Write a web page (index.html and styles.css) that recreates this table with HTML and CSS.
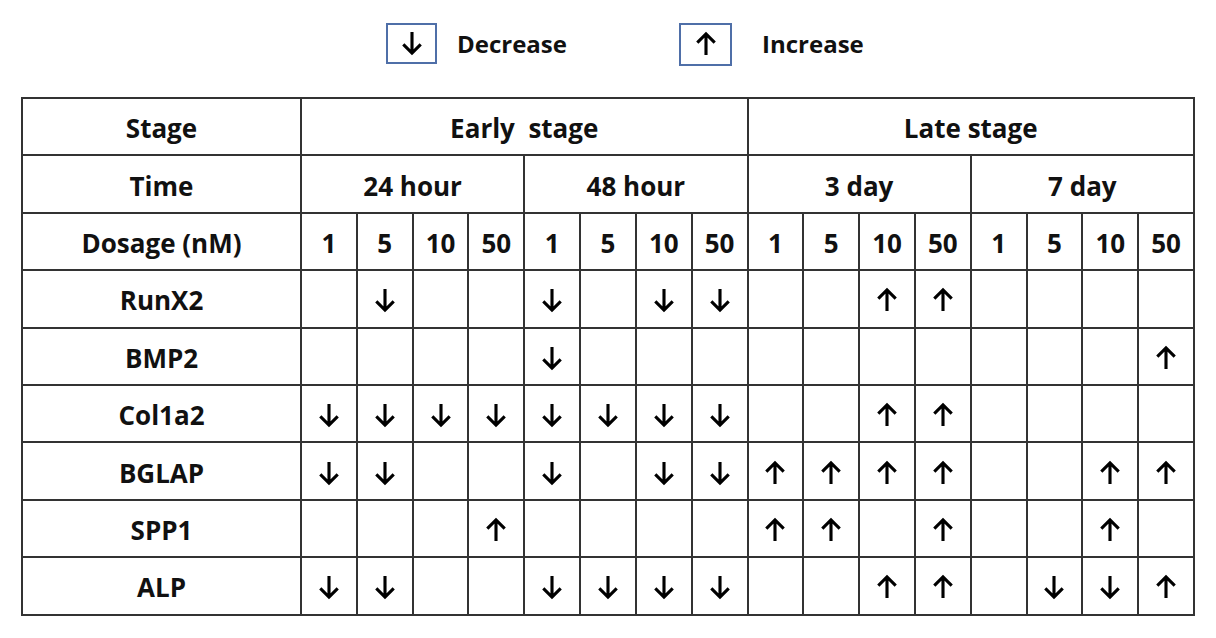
FILE: index.html
```html
<!DOCTYPE html>
<html>
<head>
<meta charset="utf-8">
<link rel="stylesheet" href="styles.css">
</head>
<body>
<svg class="defs" width="0" height="0" aria-hidden="true">
  <symbol id="dn" viewBox="0 0 24 28">
    <path d="M12 2 V25 M2.5 15.5 L12 25 L21.5 15.5" fill="none" stroke="#000" stroke-width="3.4"/>
  </symbol>
  <symbol id="up" viewBox="0 0 24 28">
    <path d="M12 26 V3 M2.5 12.5 L12 3 L21.5 12.5" fill="none" stroke="#000" stroke-width="3.4"/>
  </symbol>
</svg>
<div class="legend">
  <div class="key key-dn"><svg class="arr"><use href="#dn"/></svg></div>
  <span class="label label-dn">Decrease</span>
  <div class="key key-up"><svg class="arr"><use href="#up"/></svg></div>
  <span class="label label-up">Increase</span>
</div>
<table class="grid">
  <colgroup>
    <col class="c0">
    <col><col><col><col><col><col><col><col><col><col><col><col><col><col><col><col>
  </colgroup>
  <tr><td>Stage</td><td colspan="8">Early&nbsp; stage</td><td colspan="8">Late stage</td></tr>
  <tr><td>Time</td><td colspan="4">24 hour</td><td colspan="4">48 hour</td><td colspan="4">3 day</td><td colspan="4">7 day</td></tr>
  <tr><td>Dosage (nM)</td><td>1</td><td>5</td><td>10</td><td>50</td><td>1</td><td>5</td><td>10</td><td>50</td><td>1</td><td>5</td><td>10</td><td>50</td><td>1</td><td>5</td><td>10</td><td>50</td></tr>
  <tr><td>RunX2</td><td></td><td><svg class="arr"><use href="#dn"/></svg></td><td></td><td></td><td><svg class="arr"><use href="#dn"/></svg></td><td></td><td><svg class="arr"><use href="#dn"/></svg></td><td><svg class="arr"><use href="#dn"/></svg></td><td></td><td></td><td><svg class="arr"><use href="#up"/></svg></td><td><svg class="arr"><use href="#up"/></svg></td><td></td><td></td><td></td><td></td></tr>
  <tr><td>BMP2</td><td></td><td></td><td></td><td></td><td><svg class="arr"><use href="#dn"/></svg></td><td></td><td></td><td></td><td></td><td></td><td></td><td></td><td></td><td></td><td></td><td><svg class="arr"><use href="#up"/></svg></td></tr>
  <tr><td>Col1a2</td><td><svg class="arr"><use href="#dn"/></svg></td><td><svg class="arr"><use href="#dn"/></svg></td><td><svg class="arr"><use href="#dn"/></svg></td><td><svg class="arr"><use href="#dn"/></svg></td><td><svg class="arr"><use href="#dn"/></svg></td><td><svg class="arr"><use href="#dn"/></svg></td><td><svg class="arr"><use href="#dn"/></svg></td><td><svg class="arr"><use href="#dn"/></svg></td><td></td><td></td><td><svg class="arr"><use href="#up"/></svg></td><td><svg class="arr"><use href="#up"/></svg></td><td></td><td></td><td></td><td></td></tr>
  <tr><td>BGLAP</td><td><svg class="arr"><use href="#dn"/></svg></td><td><svg class="arr"><use href="#dn"/></svg></td><td></td><td></td><td><svg class="arr"><use href="#dn"/></svg></td><td></td><td><svg class="arr"><use href="#dn"/></svg></td><td><svg class="arr"><use href="#dn"/></svg></td><td><svg class="arr"><use href="#up"/></svg></td><td><svg class="arr"><use href="#up"/></svg></td><td><svg class="arr"><use href="#up"/></svg></td><td><svg class="arr"><use href="#up"/></svg></td><td></td><td></td><td><svg class="arr"><use href="#up"/></svg></td><td><svg class="arr"><use href="#up"/></svg></td></tr>
  <tr><td>SPP1</td><td></td><td></td><td></td><td><svg class="arr"><use href="#up"/></svg></td><td></td><td></td><td></td><td></td><td><svg class="arr"><use href="#up"/></svg></td><td><svg class="arr"><use href="#up"/></svg></td><td></td><td><svg class="arr"><use href="#up"/></svg></td><td></td><td></td><td><svg class="arr"><use href="#up"/></svg></td><td></td></tr>
  <tr><td>ALP</td><td><svg class="arr"><use href="#dn"/></svg></td><td><svg class="arr"><use href="#dn"/></svg></td><td></td><td></td><td><svg class="arr"><use href="#dn"/></svg></td><td><svg class="arr"><use href="#dn"/></svg></td><td><svg class="arr"><use href="#dn"/></svg></td><td><svg class="arr"><use href="#dn"/></svg></td><td></td><td></td><td><svg class="arr"><use href="#up"/></svg></td><td><svg class="arr"><use href="#up"/></svg></td><td></td><td><svg class="arr"><use href="#dn"/></svg></td><td><svg class="arr"><use href="#dn"/></svg></td><td><svg class="arr"><use href="#up"/></svg></td></tr>
</table>
</body>
</html>
```

FILE: styles.css
```css
html, body {
  margin: 0;
  padding: 0;
  background: #fff;
}
body {
  font-family: "Open Sans", "Lato", "DejaVu Sans", sans-serif;
  font-weight: 700;
  color: #111;
  padding-top: 22px;
}
.defs {
  position: absolute;
  width: 0;
  height: 0;
  overflow: hidden;
}
.legend {
  display: flex;
  align-items: center;
  margin-left: 386px;
  height: 42px;
}
.key {
  box-sizing: border-box;
  border: 2px solid #4f6fa8;
  display: flex;
  align-items: center;
  justify-content: center;
  flex: none;
}
.key-dn {
  width: 51px;
  height: 41px;
}
.key-up {
  width: 53px;
  height: 43px;
  margin-top: 2px;
}
.label {
  font-size: 24px;
  flex: none;
}
.label-dn {
  box-sizing: border-box;
  width: 242px;
  padding-left: 20px;
}
.label-up {
  padding-left: 30px;
}
.arr {
  width: 22px;
  height: 26px;
  display: block;
  margin: 0 auto;
}
.grid {
  margin: 33px 0 0 21px;
  border-collapse: collapse;
  table-layout: fixed;
  width: 1174px;
}
.grid .c0 {
  width: 279px;
}
.grid td {
  border: 2px solid #333;
  height: 52.4px;
  padding: 3px 0 0;
  text-align: center;
  vertical-align: middle;
  font-size: 26px;
  line-height: 1;
}
```
